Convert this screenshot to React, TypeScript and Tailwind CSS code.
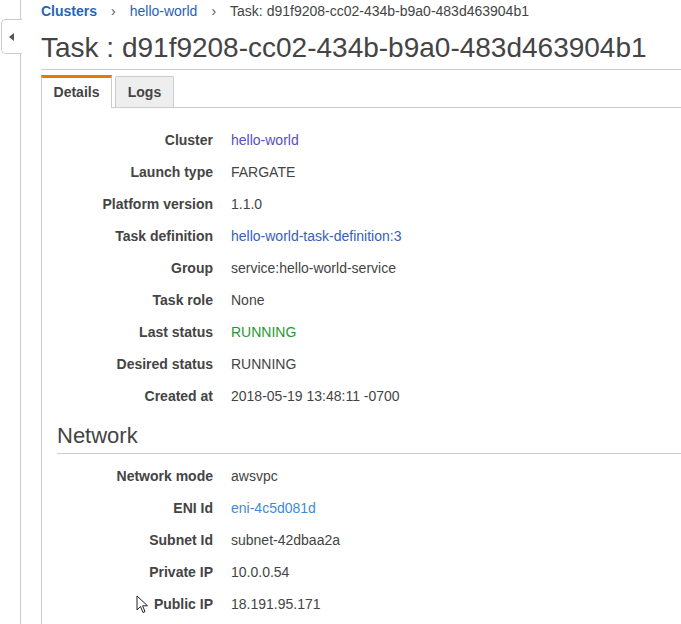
import React from 'react';

type Row = { label: string; value: string; tone?: 'link' | 'visited' | 'light' | 'ok' };

const DETAILS: Row[] = [
  { label: 'Cluster', value: 'hello-world', tone: 'visited' },
  { label: 'Launch type', value: 'FARGATE' },
  { label: 'Platform version', value: '1.1.0' },
  { label: 'Task definition', value: 'hello-world-task-definition:3', tone: 'link' },
  { label: 'Group', value: 'service:hello-world-service' },
  { label: 'Task role', value: 'None' },
  { label: 'Last status', value: 'RUNNING', tone: 'ok' },
  { label: 'Desired status', value: 'RUNNING' },
  { label: 'Created at', value: '2018-05-19 13:48:11 -0700' },
];

const NETWORK: Row[] = [
  { label: 'Network mode', value: 'awsvpc' },
  { label: 'ENI Id', value: 'eni-4c5d081d', tone: 'light' },
  { label: 'Subnet Id', value: 'subnet-42dbaa2a' },
  { label: 'Private IP', value: '10.0.0.54' },
  { label: 'Public IP', value: '18.191.95.171' },
];

const toneClass = {
  link: 'text-[#3461b8]',
  visited: 'text-[#5350bf]',
  light: 'text-[#3f8ad6]',
  ok: 'text-[#1f9a33]',
};

function DetailRow({ row }: { row: Row }) {
  return (
    <div className="flex h-[32px] items-center text-[14px] leading-[16px]">
      <div className="w-[171px] shrink-0 text-right font-bold text-[#444]">{row.label}</div>
      <div className={`pl-[18px] ${row.tone ? toneClass[row.tone] : 'text-[#444]'}`}>{row.value}</div>
    </div>
  );
}

export default function App() {
  return (
    <div
      className="flex min-h-screen h-[624px] overflow-hidden bg-white text-[#444]"
      style={{ fontFamily: '"Liberation Sans", Arial, sans-serif' }}
    >
      {/* collapsed side nav rail */}
      <div className="relative w-[21px] shrink-0 border-r border-[#cccccc]">
        <button className="absolute left-[1px] top-[19px] flex h-[35px] w-[21px] items-center justify-center rounded-l-[5px] border border-r-0 border-[#cccccc] bg-white">
          <svg width="5" height="8" viewBox="0 0 5 8" className="mr-[2px]">
            <polygon points="5,0 5,8 0,4" fill="#555" />
          </svg>
        </button>
      </div>

      <div className="relative flex-1 pl-[20px]">
        <nav className="flex h-[22px] items-center text-[14px] leading-[16px]">
          <span className="font-bold text-[#2566b6]">Clusters</span>
          <span className="px-[14px] text-[#555]">›</span>
          <span className="text-[#2c5fb4]">hello-world</span>
          <span className="px-[14px] text-[#555]">›</span>
          <span className="text-[#444]">Task: d91f9208-cc02-434b-b9a0-483d463904b1</span>
        </nav>

        <h1 className="border-b border-[#cccccc] pb-[5px] pt-[10px] text-[28px] leading-[32px] font-normal text-[#444]">
          Task : d91f9208-cc02-434b-b9a0-483d463904b1
        </h1>

        <div className="mt-[5px] flex items-end border-b border-[#cccccc]">
          <div className="-mb-px flex h-[33px] w-[71px] items-center justify-center border-x border-t-[3px] border-x-[#cccccc] border-t-[#e47911] bg-white pb-[2px] text-[14px] font-bold text-[#444]">
            Details
          </div>
          <div className="ml-[3px] flex h-[31px] w-[59px] items-center justify-center rounded-t-[2px] border border-b-0 border-[#cccccc] bg-[#eeeeee] text-[14px] font-bold text-[#444]">
            Logs
          </div>
        </div>

        <div className="h-full border-l border-[#cccccc] pt-[16px]">
          {DETAILS.map((r) => (
            <DetailRow key={r.label} row={r} />
          ))}

          <h2 className="ml-[15px] border-b border-[#cccccc] pb-[4px] pt-[11px] text-[22px] leading-[26px] font-normal text-[#444]">
            Network
          </h2>

          <div className="pt-[6px]">
            {NETWORK.map((r) => (
              <DetailRow key={r.label} row={r} />
            ))}
          </div>
        </div>

        {/* mouse pointer */}
        <svg className="absolute left-[115px] top-[595px]" width="13" height="20" viewBox="0 0 13 20">
          <path d="M1 1 L1 15 L4.5 11.5 L7 17.5 L9 16.6 L6.6 10.8 L11.5 10.8 Z" fill="#fff" stroke="#222" strokeWidth="1" strokeLinejoin="round" />
        </svg>
      </div>
    </div>
  );
}
